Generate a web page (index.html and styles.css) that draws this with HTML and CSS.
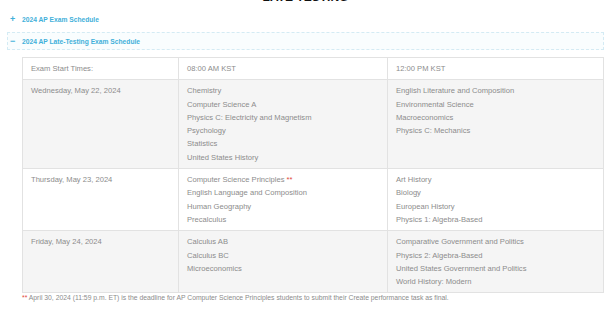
FILE: index.html
```
<html lang="en">

<head>
    <meta charset="UTF-8">
    <meta name="viewport" content="width=device-width, initial-scale=1.0">
    <title>AP Late-Testing Schedule</title>

    <link rel="stylesheet" href="styles.css">
</head>

<body>
    <h2 class="page-title">LATE TESTING</h2>

    <div class="accordion">
        <div class="toggle"><span class="sign">+</span>2024 AP Exam Schedule</div>
    </div>

    <div class="accordion open">
        <div class="toggle"><span class="sign">&minus;</span>2024 AP Late-Testing Exam Schedule</div>
    </div>

    <table class="schedule">
        <colgroup>
            <col class="col-day">
            <col class="col-am">
            <col class="col-pm">
        </colgroup>
        <tr>
            <td>Exam Start Times:</td>
            <td>08:00 AM KST</td>
            <td>12:00 PM KST</td>
        </tr>
        <tr class="shade">
            <td>Wednesday, May 22, 2024</td>
            <td>Chemistry<br>Computer Science A<br>Physics C: Electricity and Magnetism<br>Psychology<br>Statistics<br>United States History</td>
            <td>English Literature and Composition<br>Environmental Science<br>Macroeconomics<br>Physics C: Mechanics</td>
        </tr>
        <tr>
            <td>Thursday, May 23, 2024</td>
            <td>Computer Science Principles <span class="star">**</span><br>English Language and Composition<br>Human Geography<br>Precalculus</td>
            <td>Art History<br>Biology<br>European History<br>Physics 1: Algebra-Based</td>
        </tr>
        <tr class="shade">
            <td>Friday, May 24, 2024</td>
            <td>Calculus AB<br>Calculus BC<br>Microeconomics</td>
            <td>Comparative Government and Politics<br>Physics 2: Algebra-Based<br>United States Government and Politics<br>World History: Modern</td>
        </tr>
    </table>

    <p class="note"><span class="star">**</span> April 30, 2024 (11:59 p.m. ET) is the deadline for AP Computer Science Principles students to submit their Create performance task as final.</p>
</body>

</html>
```

FILE: styles.css
```
* {
    box-sizing: border-box;
    margin: 0;
    padding: 0;
}

body {
    font-family: "Liberation Sans", Arial, sans-serif;
    color: #8c8c8c;
    background: white;
    padding: 0 7px;
}

/* heading sits mostly above the fold, only its foot shows */
.page-title {
    margin-top: -9px;
    height: 9px;
    font-size: 12px;
    line-height: 13px;
    color: #111;
    text-align: center;
}

.accordion {
    margin-top: 10px;
    border: 1px solid transparent;
}

.accordion.open {
    margin-top: 4px;
    border: 1px dashed #d4ebf4;
    background: #f9fdfe;
}

.toggle {
    display: flex;
    align-items: center;
    height: 16px;
    padding-left: 2px;
    font-size: 6.7px;
    font-weight: bold;
    color: #3fb0da;
}

.sign {
    width: 12px;
    font-size: 9px;
    line-height: 9px;
}

.schedule {
    margin: 7px 0 0 15px;
    width: 582px;
    border-collapse: collapse;
    table-layout: fixed;
    font-size: 7.6px;
    line-height: 13.3px;
}

.col-day {
    width: 156px;
}

.col-am {
    width: 209px;
}

.schedule td {
    vertical-align: top;
    padding: 4px 8px;
    border: 1px solid #e2e2e2;
}

.shade td {
    background: #f5f5f5;
}

.star {
    color: #e24a3b;
}

.note {
    margin: 0 0 0 15px;
    font-size: 6.8px;
    line-height: 10px;
}
```
